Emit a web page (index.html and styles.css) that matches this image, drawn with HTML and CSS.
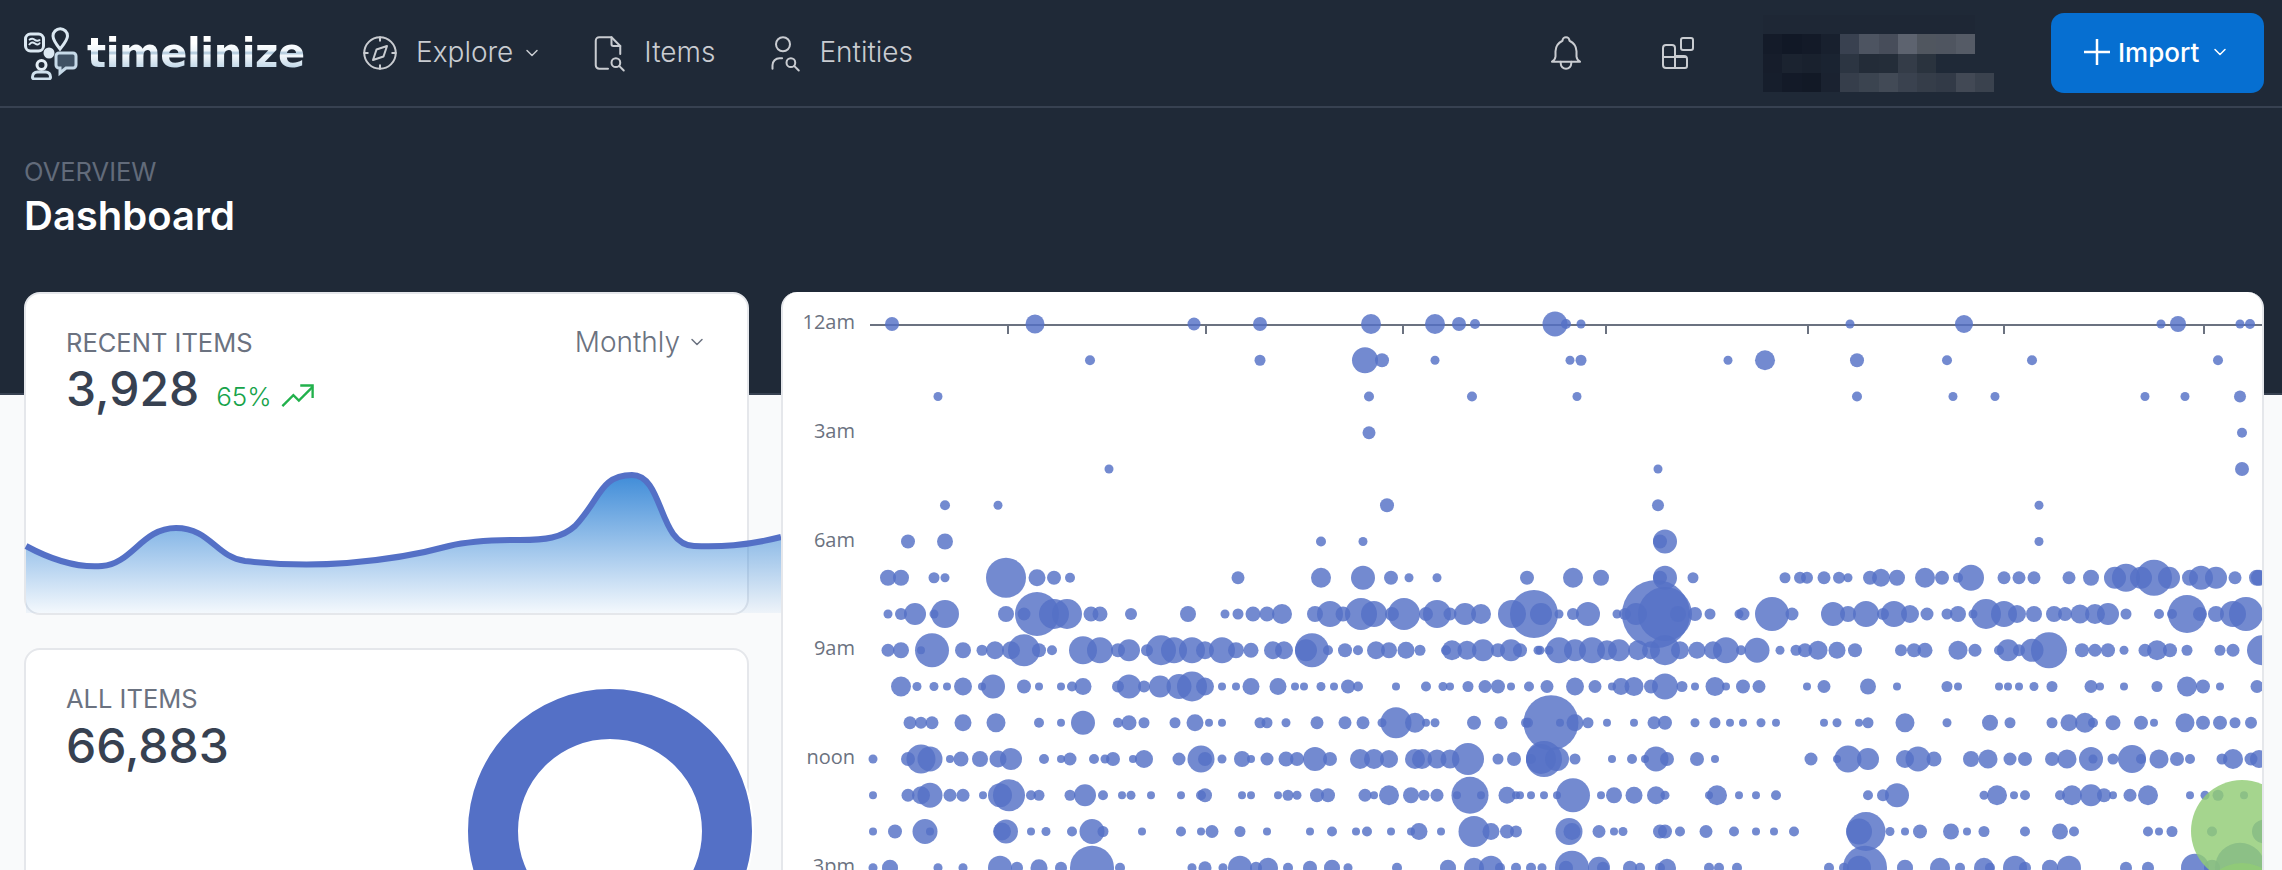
FILE: index.html
```html
<!DOCTYPE html>
<html lang="en">
<head>
    <meta charset="UTF-8">
    <meta name="viewport" content="width=device-width, initial-scale=1.0">
    <title>Timelinize - Dashboard</title>
    <link rel="stylesheet" href="styles.css">
</head>
<body>
    <header class="topbar">
        <a class="logo" href="#">
            <svg class="logo-mark" width="56" height="56" viewBox="0 0 56 56" fill="none" stroke="#dbe8f2" stroke-width="3">
                <rect x="1.5" y="10" width="18" height="17" rx="5"/>
                <path d="M5 21c2-3 4-3 6-1.500s4 1.500 5-1M5 16c3-2 5-1 6 0s4 1 5-.5" stroke-width="2"/>
                <path d="M36 25c-4-5-7-9-7-13a7.200 7.200 0 0 1 14.500 0c0 4-3.500 8-7.500 13z"/>
                <circle cx="25" cy="29" r="5.500" fill="#dbe8f2" stroke="none"/>
                <path d="M35 29h14a3 3 0 0 1 3 3v9a3 3 0 0 1-3 3h-7l-6 5v-5h-1a3 3 0 0 1-3-3v-9a3 3 0 0 1 3-3z" stroke="#c6d9e8" fill="#3f5164"/>
                <circle cx="17.500" cy="41" r="4.500" stroke="#e3edf5"/>
                <path d="M10 55a2 2 0 0 1-1.500-2c0-3 2-5 5-5h8c3 0 5 2 5 5a2 2 0 0 1-1.500 2z" stroke="#cfe0ed"/>
            </svg>
            <span class="logo-text">timelinize</span>
        </a>
        <nav class="nav">
            <a class="nav-item" href="#">
                <svg class="icon" viewBox="0 0 24 24"><path d="M8 16l2-6 6-2-2 6-6 2"/><circle cx="12" cy="12" r="9"/><path d="M12 3v2M12 19v2M3 12h2M19 12h2"/></svg>
                <span>Explore</span>
                <svg class="chevron" viewBox="0 0 24 24"><path d="M6 9l6 6 6-6"/></svg>
            </a>
            <a class="nav-item" href="#">
                <svg class="icon" viewBox="0 0 24 24"><path d="M14 3v4a1 1 0 0 0 1 1h4"/><path d="M12 21H7a2 2 0 0 1-2-2V5a2 2 0 0 1 2-2h7l5 5v4.500"/><circle cx="16.500" cy="17.500" r="2.500"/><path d="M18.500 19.500L21 22"/></svg>
                <span>Items</span>
            </a>
            <a class="nav-item" href="#">
                <svg class="icon" viewBox="0 0 24 24"><circle cx="12" cy="7" r="4"/><path d="M6 21v-2a4 4 0 0 1 4-4h1.500"/><circle cx="16.500" cy="17.500" r="2.500"/><path d="M18.500 19.500L21 22"/></svg>
                <span>Entities</span>
            </a>
        </nav>
        <div class="topbar-right">
            <svg class="icon" viewBox="0 0 24 24"><path d="M10 5a2 2 0 1 1 4 0 7 7 0 0 1 4 6v3a4 4 0 0 0 2 3H4a4 4 0 0 0 2-3v-3a7 7 0 0 1 4-6"/><path d="M9 17v1a3 3 0 0 0 6 0v-1"/></svg>
            <svg class="apps-icon" viewBox="0 0 32 32"><rect x="19" y="1" width="12" height="12" rx="2"/><path d="M4 8h6a3 3 0 0 1 3 3v8h9a3 3 0 0 1 3 3v7a2 2 0 0 1-2 2H4a3 3 0 0 1-3-3V11a3 3 0 0 1 3-3z"/><path d="M1 20h24M13 19v12"/></svg>
            <svg class="mosaic" width="231" height="77" viewBox="0 0 12 4" shape-rendering="crispEdges">
                <rect width="11" height="1" fill="#1e2735"/>
                <rect y="1" width="1" height="1" fill="#141b29"/><rect x="1" y="1" width="1" height="1" fill="#111826"/><rect x="2" y="1" width="1" height="1" fill="#131a28"/><rect x="3" y="1" width="1" height="1" fill="#18202e"/><rect x="4" y="1" width="1" height="1" fill="#394150"/><rect x="5" y="1" width="1" height="1" fill="#4d5461"/><rect x="6" y="1" width="1" height="1" fill="#474d5a"/><rect x="7" y="1" width="1" height="1" fill="#5d636f"/><rect x="8" y="1" width="1" height="1" fill="#50565f"/><rect x="9" y="1" width="1" height="1" fill="#4f5560"/><rect x="10" y="1" width="1" height="1" fill="#555b66"/>
                <rect y="2" width="1" height="1" fill="#161d2b"/><rect x="1" y="2" width="1" height="1" fill="#1b2330"/><rect x="2" y="2" width="1" height="1" fill="#19212e"/><rect x="3" y="2" width="1" height="1" fill="#1a2331"/><rect x="4" y="2" width="1" height="1" fill="#2c3542"/><rect x="5" y="2" width="1" height="1" fill="#232c38"/><rect x="6" y="2" width="1" height="1" fill="#242d39"/><rect x="7" y="2" width="1" height="1" fill="#343c48"/><rect x="8" y="2" width="1" height="1" fill="#2a333e"/>
                <rect y="3" width="1" height="1" fill="#161e2c"/><rect x="1" y="3" width="1" height="1" fill="#131a28"/><rect x="2" y="3" width="1" height="1" fill="#121926"/><rect x="3" y="3" width="1" height="1" fill="#1a2230"/><rect x="4" y="3" width="1" height="1" fill="#363e4b"/><rect x="5" y="3" width="1" height="1" fill="#3b4450"/><rect x="6" y="3" width="1" height="1" fill="#424a56"/><rect x="7" y="3" width="1" height="1" fill="#3a424f"/><rect x="8" y="3" width="1" height="1" fill="#353d49"/><rect x="9" y="3" width="1" height="1" fill="#323a47"/><rect x="10" y="3" width="1" height="1" fill="#424955"/><rect x="11" y="3" width="1" height="1" fill="#3a424e"/>
            </svg>
            <button class="import-btn">
                <svg class="plus" viewBox="0 0 28 28"><path d="M14 1v26M1 14h26"/></svg>
                <span>Import</span>
                <svg class="chevron" viewBox="0 0 24 24"><path d="M6 9l6 6 6-6"/></svg>
            </button>
        </div>
    </header>

    <section class="hero">
        <div class="pretitle">OVERVIEW</div>
        <h1>Dashboard</h1>
    </section>

    <main class="dashboard">
        <div class="column">
            <div class="card recent-card">
                <div class="card-head">
                    <div>
                        <div class="card-label">RECENT ITEMS</div>
                        <div class="stat">
                            <span class="stat-value">3,928</span>
                            <span class="trend">65%
                                <svg viewBox="0 0 24 24"><path d="M1 19l8-8 4 4 10-10"/><path d="M14 4h9v9"/></svg>
                            </span>
                        </div>
                    </div>
                    <div class="period">Monthly
                        <svg class="chevron" viewBox="0 0 24 24"><path d="M6 9l6 6 6-6"/></svg>
                    </div>
                </div>
                <svg class="sparkline" width="756" height="150" viewBox="25 465 756 150">
                    <defs>
                        <linearGradient id="areaFade" x1="0" y1="0" x2="0" y2="1">
                            <stop offset="0" stop-color="#3f8cd8"/>
                            <stop offset="1" stop-color="#3f8cd8" stop-opacity="0.06"/>
                        </linearGradient>
                    </defs>
                    <path class="spark-area" d="M26 546C50 559 78 568 102 566C132 564 142 528 176 528C210 528 216 557 245 561C280 565 320 565 347 563C385 560 420 554 449 546C470 541 490 540 520 540C545 540 562 538 575 526C600 500 600 475 632 475C664 475 658 545 694 546C720 547 745 546 781 537V613H26Z"/>
                    <path class="spark-line" d="M26 546C50 559 78 568 102 566C132 564 142 528 176 528C210 528 216 557 245 561C280 565 320 565 347 563C385 560 420 554 449 546C470 541 490 540 520 540C545 540 562 538 575 526C600 500 600 475 632 475C664 475 658 545 694 546C720 547 745 546 781 537"/>
                </svg>
            </div>
            <div class="card total-card">
                <div class="card-label">ALL ITEMS</div>
                <div class="stat-value">66,883</div>
                <svg class="donut" width="300" height="300" viewBox="0 0 300 300">
                    <circle cx="150" cy="150" r="143" fill="none" stroke="#fff" stroke-width="2"/>
                    <circle cx="150" cy="150" r="117" fill="none" stroke="#5470c6" stroke-width="50"/>
                </svg>
            </div>
        </div>
        <div class="card chart-card">
            <svg id="punchcard" width="1481" height="640" viewBox="781 292 1481 640"></svg>
        </div>
    </main>

    <script src="chart.js"></script>
</body>
</html>
```

FILE: styles.css
```css
html, body {
    height: 870px;
    overflow: hidden;
}
body {
    margin: 0;
    background-color: #f9fafb;
    font-family: Inter, "Liberation Sans", sans-serif;
    color: #374151;
}
svg {
    display: block;
    flex: none;
}
a {
    color: inherit;
    text-decoration: none;
}

/* top bar */
.topbar {
    display: flex;
    align-items: center;
    height: 106px;
    padding: 0 18px 0 24px;
    background-color: #1f2937;
    border-bottom: 2px solid #374151;
}
.logo {
    display: flex;
    align-items: center;
    gap: 7px;
    width: 335px;
}
.logo-mark {
    margin-top: -2px;
}
.logo-text {
    font-family: "DejaVu Sans", sans-serif;
    font-size: 40px;
    font-weight: 700;
    letter-spacing: -0.4px;
    line-height: 48px;
    background: linear-gradient(#ffffff 30%, #eef5fa 45%, #a9c4d8 50%, #f2f7fb 55%, #c3d9e9 80%);
    -webkit-background-clip: text;
    background-clip: text;
    color: transparent;
}
.nav {
    display: flex;
    align-items: center;
    gap: 45px;
}
.nav-item {
    display: flex;
    align-items: center;
    gap: 15px;
    font-size: 28px;
    font-weight: 300;
    line-height: 40px;
    color: #c9ccd1;
}
.nav-item:last-child {
    margin-left: 2px;
}
.nav-item span {
    margin-top: -2px;
}
.icon {
    width: 42px;
    height: 42px;
    fill: none;
    stroke: #c9ccd1;
    stroke-width: 1.150;
    stroke-linecap: round;
    stroke-linejoin: round;
}
.chevron {
    width: 20px;
    height: 20px;
    margin-left: -6px;
    fill: none;
    stroke: currentColor;
    stroke-width: 1.800;
    stroke-linecap: round;
    stroke-linejoin: round;
}
.topbar-right {
    display: flex;
    align-items: center;
    margin-left: auto;
}
.apps-icon {
    width: 32px;
    height: 32px;
    margin-left: 75px;
    fill: none;
    stroke: #c9ccd1;
    stroke-width: 2;
}
.mosaic {
    margin-left: 69px;
    margin-right: 57px;
}
.import-btn {
    display: flex;
    align-items: center;
    width: 213px;
    height: 80px;
    padding: 0 0 2px 32px;
    border: none;
    border-radius: 13px;
    background-color: #066fd1;
    color: #fff;
    font-family: inherit;
    font-size: 26px;
    font-weight: 500;
    cursor: pointer;
}
.plus {
    width: 28px;
    height: 28px;
    margin-right: 7px;
    fill: none;
    stroke: #fff;
    stroke-width: 2.500;
}
.import-btn .chevron {
    margin-left: 11px;
}

/* page heading */
.hero {
    height: 287px;
    padding: 50px 24px 0;
    box-sizing: border-box;
    background-color: #1f2937;
    border-bottom: 2px solid #374151;
}
.pretitle {
    font-size: 25.500px;
    line-height: 28px;
    font-weight: 400;
    color: #626b7a;
}
h1 {
    margin: 7px 0 0;
    font-size: 40px;
    line-height: 46px;
    font-weight: 600;
    color: #fff;
}

/* cards */
.dashboard {
    display: grid;
    grid-template-columns: 725px 1483px;
    gap: 32px;
    margin: -103px 0 0 24px;
}
.column {
    display: flex;
    flex-direction: column;
    gap: 33px;
}
.card {
    position: relative;
    box-sizing: border-box;
    background-color: #fff;
    border: 2px solid #e5e7eb;
    border-radius: 16px;
}
.recent-card {
    height: 323px;
    padding: 35px 40px 0;
}
.total-card {
    height: 400px;
    padding: 35px 40px 0;
}
.chart-card {
    height: 800px;
    border-width: 0 2px 0 2px;
    overflow: hidden;
}
.chart-card svg {
    margin: 0 0 0 -2px;
}
.card-head {
    display: flex;
    justify-content: space-between;
    position: relative;
    z-index: 1;
}
.card-label {
    font-size: 25.500px;
    line-height: 28px;
    font-weight: 400;
    color: #6b7280;
}
.stat {
    display: flex;
    align-items: baseline;
    gap: 17px;
    margin-top: 3px;
}
.total-card .stat-value {
    margin-top: 4px;
}
.stat-value {
    font-size: 48px;
    line-height: 58px;
    font-weight: 500;
    color: #374151;
}
.trend {
    display: flex;
    align-items: center;
    gap: 9px;
    font-size: 26px;
    font-weight: 300;
    color: #16a34a;
}
.trend svg {
    width: 33px;
    height: 33px;
    fill: none;
    stroke: #22b14c;
    stroke-width: 1.700;
}
.period {
    display: flex;
    align-items: center;
    gap: 7px;
    height: 26px;
    font-size: 28px;
    font-weight: 300;
    color: #6b7280;
}
.period .chevron {
    margin-left: 0;
}
.sparkline {
    position: absolute;
    left: -1px;
    top: 171px;
    overflow: visible;
}
.spark-area {
    fill: url(#areaFade);
}
.spark-line {
    fill: none;
    stroke: #5470c6;
    stroke-width: 6;
}
.donut {
    position: absolute;
    left: 434px;
    top: 31px;
    overflow: visible;
}

/* punch card chart */
.axis-line {
    stroke: #6b7280;
    stroke-width: 2;
}
.hour-label {
    font-family: "Open Sans", sans-serif;
    font-size: 20px;
    fill: #6b7280;
    text-anchor: end;
}
```

FILE: chart.js
```js
// x, radius pairs for every row of the chart, in page coordinates
const rows = [
    [892,7, 1035,9.5, 1194,6.5, 1260,7, 1371,10, 1435,10, 1459,7, 1475,5, 1555,12.5, 1566,5, 1581,4.5, 1850,4.5, 1964,9, 2161,4.5, 2178,8, 2240,4.5, 2250,5],
    [1090,5, 1260,5.5, 1365,13, 1382,7, 1435,4.5, 1570,4.5, 1581,5.5, 1728,4.5, 1765,10, 1857,7, 1947,5, 2032,5, 2218,5],
    [938,4.5, 1369,5, 1472,5, 1577,4.5, 1857,5, 1953,4.5, 1995,4.5, 2145,4.5, 2185,4.5, 2240,6],
    [1369,6.5, 2242,5],
    [1109,4.5, 1658,4.5, 2242,7],
    [945,5, 998,4.5, 1387,7, 1658,6, 2039,4.5],
    [908,7, 945,8, 1321,5, 1363,4.5, 1665,12, 1660,7, 2039,4.5],
    [888,8, 901,8, 934,5.5, 945,4.5, 1006,20, 1037,8.5, 1054,7, 1070,5, 1238,6.5, 1321,10, 1363,12, 1391,7, 1409,4.5, 1437,4.5, 1527,7, 1573,10, 1601,8, 1665,12, 1660,7, 1693,5.5, 1785,5.5, 1800,6, 1807,6, 1824,6.5, 1839,6, 1848,4.5, 1870,7, 1881,9, 1897,8, 1925,10, 1942,7, 1958,5, 1971,13, 2004,6.5, 2019,6.5, 2034,6.5, 2069,6.5, 2091,8, 2115,11, 2126,14, 2141,11, 2154,18, 2169,11, 2190,8, 2201,12, 2216,11, 2235,6.5, 2257,8, 2259,8],
    [888,4.5, 901,6, 915,11, 934,4.5, 945,14, 1006,8, 1024,6.5, 1037,22, 1054,15, 1067,15, 1091,7.5, 1100,7.5, 1131,6, 1188,8, 1225,4.5, 1238,5.5, 1253,7.5, 1267,7.5, 1282,10, 1315,8, 1330,13, 1343,7.5, 1361,16, 1374,13, 1392,7, 1404,16, 1426,7, 1437,14, 1450,6.5, 1465,11, 1481,10, 1512,14, 1534,24, 1541,11, 1559,4.5, 1573,6, 1588,12, 1617,4.5, 1625,6, 1636,11, 1656,34, 1665,27, 1678,8, 1695,7, 1710,5.5, 1739,4.5, 1743,6.5, 1772,17, 1792,6.5, 1833,12, 1848,8, 1866,13, 1883,6, 1894,13, 1910,9, 1927,6.5, 1947,5.5, 1958,8, 1973,4.5, 1986,15, 2004,13, 2017,9, 2034,8, 2054,8, 2065,7, 2080,9.5, 2095,10, 2108,11, 2126,5.5, 2159,5, 2172,5, 2187,19, 2200,7, 2216,8, 2233,13, 2246,17],
    [888,6.5, 901,8, 921,4, 932,17, 963,8, 982,5.5, 995,9, 1011,9, 1024,16, 1039,7, 1052,5, 1083,14, 1100,13, 1118,7, 1129,11, 1147,6, 1161,15, 1174,13, 1192,13, 1205,9, 1222,13, 1236,8, 1251,7.5, 1273,9, 1284,9, 1306,11, 1312,17, 1328,5, 1345,7, 1358,5, 1376,9, 1389,8, 1406,8.5, 1420,5.5, 1446,5, 1452,10, 1467,9.5, 1483,11, 1498,7, 1511,11, 1538,4.5, 1520,7, 1540,4.5, 1549,4.5, 1559,13, 1575,11, 1592,13, 1607,10, 1619,11, 1638,10, 1651,9, 1665,15, 1680,9, 1697,8.5, 1713,9, 1726,13, 1741,5, 1757,12.5, 1780,4.5, 1796,5.5, 1805,7, 1818,9.5, 1837,8.5, 1855,7, 1901,6, 1914,7, 1925,7.5, 1958,9.5, 1975,6.5, 1999,5, 2008,11, 2019,6, 2032,11.5, 2049,18, 2082,7, 2095,6.5, 2108,7, 2124,4.5, 2145,6.5, 2157,10, 2170,7, 2187,5.5, 2220,5.5, 2233,6.5, 2262,15],
    [901,10, 917,4.5, 934,4.5, 947,4, 963,9, 982,4, 993,12, 1024,7, 1039,4, 1061,4, 1072,5, 1083,8.5, 1118,6, 1129,12, 1144,6, 1160,11, 1179,12.5, 1192,15, 1205,9, 1222,4, 1236,4, 1251,8.5, 1278,8.5, 1295,4, 1304,4, 1321,4.5, 1334,4, 1348,7, 1358,5, 1396,4, 1426,5, 1443,4.5, 1450,4, 1468,5.5, 1485,6.5, 1498,7, 1511,4, 1529,5, 1547,6.5, 1575,9, 1595,6.5, 1612,4, 1621,8.5, 1634,9.5, 1651,7, 1665,13, 1682,5.5, 1695,4, 1715,9.5, 1726,4, 1743,7, 1759,6.5, 1807,4, 1824,6.5, 1868,8, 1897,4, 1947,5.5, 1958,4, 1999,4, 2008,4, 2019,4, 2034,4.5, 2052,5.5, 2091,6.5, 2100,4, 2124,4, 2157,5.5, 2187,10, 2203,7, 2220,4, 2257,6.5],
    [910,6.5, 921,6, 932,6.5, 963,8.5, 996,9.5, 1039,5, 1061,4, 1083,12, 1118,5, 1129,7.5, 1144,5.5, 1175,5.5, 1195,8.5, 1209,4, 1222,4, 1260,5.5, 1267,5.5, 1286,4.5, 1317,6.5, 1345,6.5, 1363,6.5, 1382,4.5, 1396,15.5, 1415,10, 1426,4, 1435,4.5, 1474,7, 1501,6.5, 1526,5, 1551,27.5, 1528,5, 1560,4, 1575,8.5, 1588,5.5, 1607,4, 1634,4, 1654,6.5, 1665,7, 1695,4.5, 1715,5.5, 1730,4, 1743,4, 1761,4.5, 1776,4, 1824,4, 1837,4.5, 1859,4, 1868,5.5, 1905,9.5, 1947,4.5, 1990,8, 2010,5.5, 2052,5.5, 2069,8.5, 2085,10, 2093,5, 2113,7.5, 2141,7, 2154,4, 2185,9.5, 2203,7, 2220,7, 2235,5.5, 2251,6],
    [873,4.5, 908,7, 921,14.5, 930,12.5, 950,4, 961,7.5, 980,8, 998,8.5, 1011,11, 1044,5, 1061,4, 1070,6.5, 1094,5, 1105,4.5, 1113,7, 1133,4, 1144,9, 1179,6.5, 1201,13.5, 1205,7, 1222,4.5, 1242,8, 1251,4, 1267,6.5, 1286,7.5, 1297,7, 1315,12, 1330,7, 1360,10, 1374,10, 1389,9, 1415,10, 1422,10, 1437,9.5, 1450,9.5, 1468,16, 1498,5.5, 1514,7, 1531,5, 1541,15, 1544,18, 1557,12, 1575,5.5, 1612,4, 1632,5, 1645,4, 1656,12.5, 1667,7, 1697,7, 1715,4, 1811,6.5, 1837,4, 1848,13.5, 1868,11, 1905,9, 1918,12.5, 1934,7.5, 1971,8, 1988,9.5, 2010,6.5, 2025,7, 2052,7, 2067,9.5, 2091,12, 2093,4.5, 2113,5.5, 2132,14, 2141,5, 2159,9.5, 2177,7, 2190,5, 2222,5.5, 2233,10, 2251,6.5, 2259,9],
    [873,4, 908,6.5, 921,9, 930,12.5, 950,6.5, 963,6.5, 983,4, 1000,12, 1009,16, 1031,5, 1039,5.5, 1070,5.5, 1085,11, 1103,5, 1122,4, 1131,4.5, 1151,4, 1181,4, 1201,5, 1205,7, 1242,4, 1251,4, 1278,4, 1288,5.5, 1297,4.5, 1317,7, 1328,7, 1365,6.5, 1374,4, 1389,10, 1411,8, 1424,5.5, 1437,6.5, 1457,4, 1470,18.5, 1481,4, 1507,8.5, 1516,4, 1531,4, 1520,4, 1544,4, 1557,4, 1573,17, 1601,4, 1614,8, 1634,8.5, 1656,9, 1665,4.5, 1709,4, 1717,10, 1739,4, 1756,4, 1776,5, 1868,5, 1883,6, 1897,12, 1984,4.5, 1997,10, 2014,4, 2025,5, 2060,5, 2072,10, 2091,11, 2104,7, 2113,4, 2130,6.5, 2148,10, 2190,4, 2205,4.5, 2218,5.5, 2244,4],
    [873,4, 895,7, 925,12.5, 930,4, 1002,9, 1006,12, 1031,4, 1046,4.5, 1072,5, 1092,12.5, 1103,5.5, 1142,4, 1181,5, 1201,4, 1212,6.5, 1240,5.5, 1267,4, 1310,4, 1332,5, 1356,4, 1367,5, 1391,4, 1411,4, 1419,8.5, 1441,4, 1474,15.5, 1491,8.5, 1507,7, 1516,6, 1569,13.5, 1572,8.5, 1599,6.5, 1614,4, 1623,4.5, 1660,7, 1665,7, 1680,5, 1706,6.5, 1734,5, 1756,4, 1774,4, 1794,5, 1866,19.5, 1859,13, 1890,4.5, 1905,4, 1920,7, 1951,8, 1967,4, 1984,5.5, 2025,5, 2060,8, 2074,5, 2148,5, 2159,4, 2172,5.5, 2212,5, 2264,12],
    [873,4.5, 890,8, 938,4.5, 963,4.5, 1000,12, 1017,6, 1039,8.5, 1061,6, 1092,22, 1120,5, 1192,4.5, 1205,6.5, 1223,4.5, 1240,12, 1256,6, 1268,10, 1288,5, 1310,7, 1332,8, 1348,4.5, 1397,5, 1448,8, 1474,10, 1491,12, 1500,5, 1516,5, 1531,5, 1542,4.5, 1566,7, 1572,17, 1599,11, 1603,6, 1630,7, 1640,5, 1660,5, 1667,9, 1709,5, 1719,5, 1737,5, 1829,5, 1844,5, 1865,22, 1859,12, 1905,8, 1940,10, 1960,5, 1984,10, 1990,5, 2015,12, 2025,6, 2050,8, 2069,12, 2126,6, 2148,6, 2195,14, 2212,8, 2240,25]
];

const firstRow = 324;
const rowStep = 36.25;
const ticks = [1008, 1206, 1403, 1606, 1808, 2004, 2204];
const hours = [['12am', 0], ['3am', 3], ['6am', 6], ['9am', 9], ['noon', 12], ['3pm', 15]];

const chart = document.getElementById('punchcard');

function add(tag, attrs) {
    const el = document.createElementNS('http://www.w3.org/2000/svg', tag);
    Object.keys(attrs).forEach(k => el.setAttribute(k, attrs[k]));
    chart.appendChild(el);
    return el;
}

add('line', { class: 'axis-line', x1: 870, y1: 325, x2: 2262, y2: 325 });
ticks.forEach(x => add('line', { class: 'axis-line', x1: x, y1: 325, x2: x, y2: 334 }));

hours.forEach(h => {
    const label = add('text', { class: 'hour-label', x: 855, y: firstRow + h[1] * rowStep + 5 });
    label.textContent = h[0];
});

rows.forEach((row, i) => {
    for (let n = 0; n < row.length; n += 2) {
        add('circle', {
            cx: row[n],
            cy: firstRow + i * rowStep,
            r: row[n + 1],
            fill: '#5470c6',
            'fill-opacity': 0.82
        });
    }
});

// the green series is drawn over the blue one
add('circle', { cx: 2242, cy: 831, r: 51, fill: '#91cc75', 'fill-opacity': 0.82 });
add('circle', { cx: 2242, cy: 903, r: 40, fill: '#91cc75', 'fill-opacity': 0.82 });
```
